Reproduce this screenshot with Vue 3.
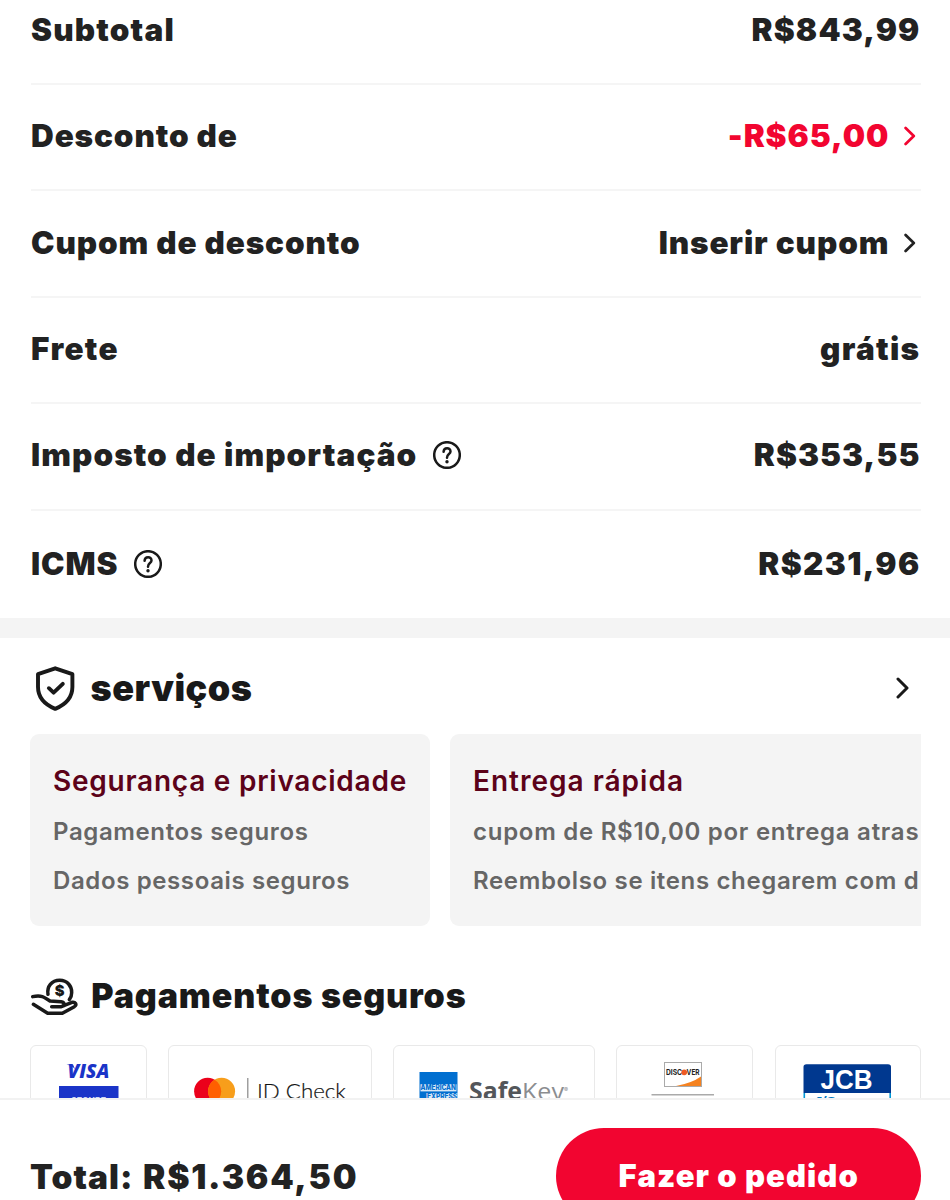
<script setup>
const rows = [
  { label: 'Subtotal', labelClass: 'ls-11', value: 'R$843,99', valueClass: 'ls-11' },
  { label: 'Desconto de', labelClass: 'ls-08', value: '-R$65,00', valueClass: 'ls-09 red', arrow: true },
  { label: 'Cupom de desconto', labelClass: 'ls-08', value: 'Inserir cupom', valueClass: 'ls-08', arrow: true },
  { label: 'Frete', labelClass: 'ls-13', value: 'grátis', valueClass: 'ls-13' },
  { label: 'Imposto de importação', labelClass: 'ls-10', value: 'R$353,55', valueClass: 'ls-10', help: true },
  { label: 'ICMS', labelClass: 'ls-08', value: 'R$231,96', valueClass: 'ls-13', help: true },
]

const services = [
  { title: 'Segurança e privacidade', titleClass: 'title-long', lines: ['Pagamentos seguros', 'Dados pessoais seguros'] },
  { title: 'Entrega rápida', titleClass: 'title-short', lines: ['cupom de R$10,00 por entrega atras', 'Reembolso se itens chegarem com d'] },
]
</script>

<template>
  <main class="page">
    <section class="summary">
      <div v-for="row in rows" :key="row.label" class="row">
        <span class="label" :class="row.labelClass">{{ row.label }}</span>
        <svg v-if="row.help" class="help" viewBox="0 0 28 28">
          <circle cx="14" cy="14" r="12.8" />
          <path d="M10.6 10.8C10.8 6.2 17.5 6.2 17.5 10.4C17.5 13.1 14 13.1 14 16.7" />
          <circle class="dot" cx="14" cy="20.8" r="1.7" />
        </svg>
        <span class="value" :class="row.valueClass">{{ row.value }}</span>
        <svg v-if="row.arrow" class="arrow" :class="row.valueClass" viewBox="0 0 12 20">
          <path d="M1.6 2L9.8 10L1.6 18" />
        </svg>
      </div>
    </section>

    <section class="services">
      <header class="services-head">
        <svg class="head-icon" viewBox="0 0 50 50">
          <path class="shield" d="M25.2 4.3L42.4 10.2V23C42.4 34.5 34 41.2 25.2 44.9C16.4 41.2 8 34.5 8 23V10.2Z" />
          <path class="check" d="M18.9 24.2L23.6 28.6L32.8 19.8" />
        </svg>
        <h2 class="services-title">serviços</h2>
        <svg class="arrow wide" viewBox="0 0 14 22"><path d="M2 2L11 11L2 20" /></svg>
      </header>
      <div class="cards">
        <article v-for="card in services" :key="card.title" class="card">
          <h3 :class="card.titleClass">{{ card.title }}</h3>
          <p v-for="line in card.lines" :key="line">{{ line }}</p>
        </article>
      </div>
    </section>

    <section class="payments">
      <header class="pay-head">
        <svg class="hand" viewBox="15 0 150 165">
          <path d="M69 73C65 50 80 31 104 31C128 31 141 50 140 68C140 77 137 84 133 89" />
          <path d="M23 80C48 74 58 81 75 93L108 95C121 97 120 108 108 110L80 110" />
          <path d="M25 103L68 130H112L148 110C157 104 151 95 141 97L118 106" />
          <text x="104" y="77" text-anchor="middle">$</text>
        </svg>
        <h2 class="pay-title">Pagamentos seguros</h2>
      </header>
      <div class="brands">
        <div class="brand visa">
          <svg viewBox="30 1045 117 60">
            <text class="visa-word" x="67.5" y="1078" textLength="42" lengthAdjust="spacingAndGlyphs">VISA</text>
            <path d="M66.5 1064.5H73L75 1069Q72 1065.5 66.5 1064.5Z" fill="#1a34c8" />
            <rect x="59" y="1086" width="59.5" height="30" fill="#1a34c8" />
            <text class="visa-sub" x="71" y="1104.5" textLength="35" lengthAdjust="spacingAndGlyphs">SECURE</text>
          </svg>
        </div>
        <div class="brand mastercard">
          <svg viewBox="168 1045 204 60">
            <circle cx="207.6" cy="1091.3" r="13.5" fill="#eb001b" />
            <circle cx="221.6" cy="1091.3" r="13.5" fill="#f79e1b" />
            <path d="M214.6 1079.7A13.5 13.5 0 0 1 214.6 1102.9A13.5 13.5 0 0 1 214.6 1079.7Z" fill="#ff5f00" />
            <path d="M247.8 1078V1110" stroke="#888" stroke-width="1.2" />
            <text class="idcheck" x="257" y="1099.3" textLength="89" lengthAdjust="spacingAndGlyphs">ID Check</text>
          </svg>
        </div>
        <div class="brand amex">
          <svg viewBox="393 1045 202 60">
            <rect x="419.5" y="1072" width="38" height="38" fill="#016fd0" />
            <rect x="420.5" y="1084.2" width="36" height="7.2" fill="#d7e8f7" />
            <rect x="426.5" y="1093" width="31" height="8" fill="#d7e8f7" />
            <text class="amex-word" x="420.5" y="1090.4" textLength="35.5" lengthAdjust="spacingAndGlyphs">AMERICAN</text>
            <text class="amex-word" x="427" y="1099.2" textLength="30" lengthAdjust="spacingAndGlyphs">EXPRESS</text>
            <text class="safe" x="469" y="1099.5" textLength="53" lengthAdjust="spacingAndGlyphs">Safe</text>
            <text class="key" x="522" y="1099.5" textLength="42" lengthAdjust="spacingAndGlyphs">Key</text>
            <text class="reg" x="564" y="1092">®</text>
          </svg>
        </div>
        <div class="brand discover">
          <svg viewBox="616 1045 137 60">
            <rect x="664.5" y="1062.5" width="37" height="24" fill="#fff" stroke="#aaa" />
            <path d="M701 1076.5V1086H676Q692 1083 701 1076.5Z" fill="#f58220" />
            <text class="disc" x="666" y="1075.2" textLength="16" lengthAdjust="spacingAndGlyphs">DISC</text>
            <circle cx="684.2" cy="1072.3" r="2.9" fill="#ee5a24" />
            <text class="disc" x="686.6" y="1075.2" textLength="13" lengthAdjust="spacingAndGlyphs">VER</text>
            <path d="M651.5 1094.8H714" stroke="#aaa" stroke-width="1.6" />
          </svg>
        </div>
        <div class="brand jcb">
          <svg viewBox="775 1045 146 60">
            <path d="M803.5 1093V1067Q803.5 1064.3 806.5 1064.3H888Q891 1064.3 891 1067V1093Z" fill="#00388f" />
            <path d="M804.3 1093V1112M890.2 1093V1112" stroke="#0097d6" stroke-width="1.6" />
            <text class="jcb-word" x="820.5" y="1088.7" textLength="52" lengthAdjust="spacingAndGlyphs">JCB</text>
            <text class="jcb-sub" x="813" y="1107">J/Secure</text>
          </svg>
        </div>
      </div>
    </section>

    <footer class="bar">
      <div class="total"><span class="total-label">Total:</span><span class="total-value">R$1.364,50</span></div>
      <button class="buy">Fazer o pedido</button>
    </footer>
  </main>
</template>

<style>
body {
  margin: 0;
  overflow: hidden;
}
</style>

<style scoped>
* {
  box-sizing: border-box;
}
.page {
  display: flex;
  flex-direction: column;
  width: 950px;
  height: 1200px;
  overflow: hidden;
  background: #fff;
  color: #222;
  font-family: Inter, sans-serif;
  font-weight: 900;
}
h2, h3, p {
  margin: 0;
}
svg {
  display: block;
  flex: none;
  fill: none;
}
.summary {
  flex: none;
  height: 659.4px;
  padding: 0 29.5px 0 30.5px;
  margin-top: -21.4px;
  border-bottom: 20.5px solid #f4f4f4;
}
.row {
  display: flex;
  align-items: center;
  height: 106.4px;
  padding-bottom: 2px;
  border-bottom: 2px solid #f5f5f5;
  font-size: 31.5px;
  line-height: 40px;
  white-space: nowrap;
}
.row:last-child {
  border: 0;
  padding: 1px 0 0;
}
.label {
  padding-left: 0.5px;
}
.value {
  margin-left: auto;
}
.ls-08 { letter-spacing: 0.87px; }
.ls-09 { letter-spacing: 0.93px; }
.ls-10 { letter-spacing: 1.06px; }
.ls-11 { letter-spacing: 1.16px; }
.ls-13 { letter-spacing: 1.35px; }
.red {
  color: #f20530;
}
.help {
  width: 28px;
  height: 28px;
  margin-left: 15.7px;
  stroke: #191919;
  stroke-width: 2.5;
  stroke-linecap: round;
}
.help .dot {
  fill: #191919;
  stroke: none;
}
.arrow {
  width: 12px;
  height: 20px;
  margin: 0 4.2px 0 15px;
  stroke: currentColor;
  stroke-width: 2.7;
  stroke-linecap: round;
  stroke-linejoin: round;
}
.services {
  flex: none;
  padding: 26px 29px 0 30px;
}
.services-head {
  display: flex;
  align-items: center;
  height: 49px;
  color: #191919;
}
.head-icon {
  width: 50px;
  height: 50px;
}
.shield, .check {
  stroke: #191919;
  stroke-width: 3.9;
  stroke-linejoin: round;
  stroke-linecap: round;
}
.services-title {
  margin-left: 10.5px;
  padding-bottom: 2px;
  font-size: 36px;
  line-height: 46px;
  font-weight: 900;
  letter-spacing: 0.5px;
}
.arrow.wide {
  width: 14px;
  height: 22px;
  margin: 0 11.5px 2px auto;
  stroke-width: 3;
}
.cards {
  display: flex;
  gap: 20px;
  margin-top: 21px;
  height: 192px;
  overflow: hidden;
}
.card {
  flex: none;
  height: 192px;
  padding: 23.5px 23px 0;
  border-radius: 9px;
  background: #f4f4f4;
  white-space: nowrap;
}
.card:first-child {
  width: 400px;
}
.card:last-child {
  width: 560px;
}
.card h3 {
  margin-bottom: 4.5px;
  color: #5c0219;
  font-size: 28px;
  line-height: 46px;
  font-weight: 600;
}
.title-long { letter-spacing: 0.76px; }
.title-short { letter-spacing: 1px; }
.card p {
  color: #666;
  font-size: 24px;
  line-height: 48.6px;
  font-weight: 600;
  letter-spacing: 0.62px;
}
.card:last-child p {
  letter-spacing: 0.65px;
}
.card:last-child p:nth-child(2) {
  letter-spacing: 0.73px;
}
.payments {
  flex: none;
  height: 172px;
  padding: 44px 29px 0 30px;
  overflow: hidden;
}
.pay-head {
  display: flex;
  height: 55px;
  color: #191919;
}
.hand {
  width: 50px;
  height: 55px;
  stroke: #191919;
  stroke-width: 10.5;
  stroke-linecap: round;
  stroke-linejoin: round;
}
.hand text {
  fill: #191919;
  stroke: none;
  font: 900 44px Inter, sans-serif;
}
.pay-title {
  margin-left: 11.3px;
  font-size: 34px;
  line-height: 52px;
  font-weight: 900;
  letter-spacing: 0.86px;
}
.brands {
  display: flex;
  gap: 21px;
  margin-top: 20px;
}
.brand {
  flex: none;
  height: 80px;
  border: 1.5px solid #e9e9e9;
  border-radius: 6px;
}
.brand svg {
  width: calc(100% + 2px);
  height: 60px;
  margin: -1px;
}
.visa { width: 117px; }
.mastercard { width: 204px; }
.amex { width: 202px; }
.discover { width: 137px; }
.jcb { width: 146px; margin-left: 1px; }
.visa-word {
  fill: #1a34c8;
  font: italic 800 18.5px "Open Sans", sans-serif;
}
.visa-sub {
  fill: #cfd6f5;
  font: 800 10px Inter, sans-serif;
}
.idcheck {
  fill: #111;
  stroke: #111;
  stroke-width: 0.2;
  font: 300 21.5px Lato, sans-serif;
}
.amex-word {
  fill: #016fd0;
  font: 800 7.5px Inter, sans-serif;
}
.safe {
  fill: #53565a;
  font: 700 24.5px "Open Sans", sans-serif;
}
.key {
  fill: #8b8d90;
  font: 400 24.5px "Open Sans", sans-serif;
}
.reg {
  fill: #8b8d90;
  font: 400 6px Inter, sans-serif;
}
.disc {
  fill: #222;
  font: 700 8px Inter, sans-serif;
}
.jcb-word {
  fill: #fff;
  font: 700 27px "Liberation Sans", sans-serif;
}
.jcb-sub {
  fill: #0079c1;
  font: italic 700 15px "Liberation Sans", sans-serif;
}
.bar {
  display: flex;
  flex: none;
  justify-content: space-between;
  height: 130px;
  padding: 28px 29px 0 30px;
  border-top: 2px solid #f2f2f2;
  background: #fff;
}
.total {
  display: flex;
  font-size: 33.5px;
  line-height: 98px;
}
.total-label {
  width: 113px;
  letter-spacing: 1.05px;
}
.total-value {
  letter-spacing: 1.75px;
}
.buy {
  width: 365.5px;
  height: 96px;
  padding: 0 0 1px 1px;
  border: 0;
  border-radius: 48px;
  background: #f20530;
  color: #fff;
  font: 900 31px Inter, sans-serif;
  letter-spacing: 1.08px;
}
</style>
